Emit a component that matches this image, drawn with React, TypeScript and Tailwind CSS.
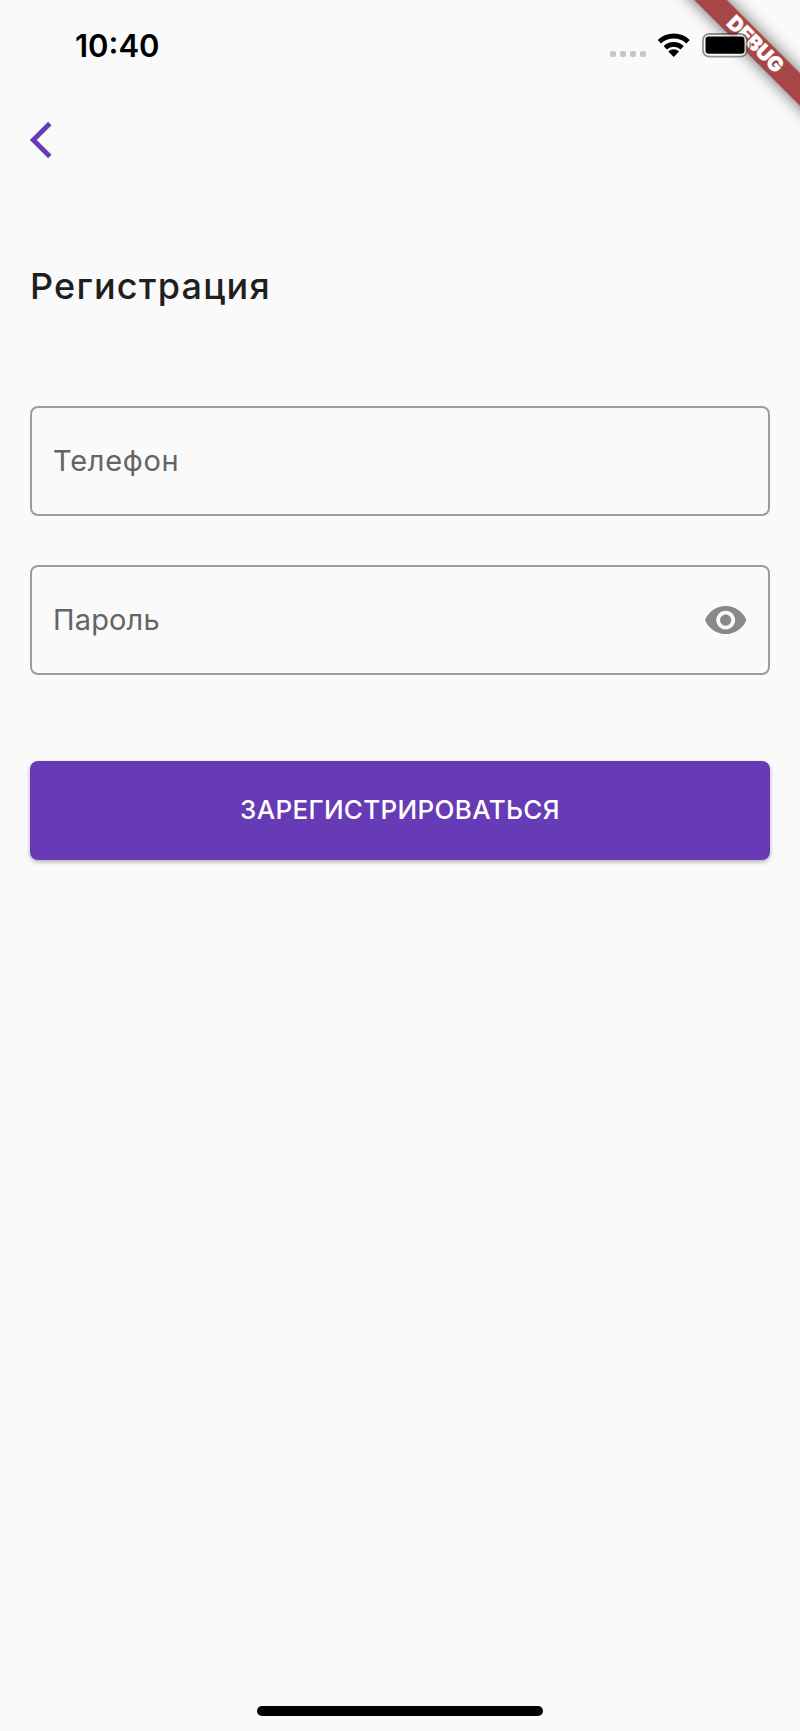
function SignalDots() {
  return (
    <div className="flex gap-1">
      <span className="size-1.5 rounded-[2px] bg-[#c6c6c6]" />
      <span className="size-1.5 rounded-[2px] bg-[#c6c6c6]" />
      <span className="size-1.5 rounded-[2px] bg-[#c6c6c6]" />
      <span className="size-1.5 rounded-[2px] bg-[#c6c6c6]" />
    </div>
  );
}

function WifiIcon() {
  return (
    <svg width="32" height="24" viewBox="0 0 32 24" fill="none" stroke="#000" strokeWidth="4.8">
      <path d="M1.3 8.7A21.1 21.1 0 0 1 30.1 8.7" />
      <path d="M7.2 14.8A12.5 12.5 0 0 1 24.2 14.8" strokeWidth="4.7" />
      <path d="M15.7 23.9 10.3 18.5A7.6 7.6 0 0 1 21.1 18.5Z" fill="#000" stroke="none" />
    </svg>
  );
}

function BatteryIcon() {
  return (
    <svg width="51" height="25" viewBox="0 0 51 25">
      <rect x="1" y="1" width="43.8" height="22.6" rx="6" fill="#fafafa" fillOpacity="0.7" stroke="#000" strokeOpacity="0.42" strokeWidth="1.8" />
      <rect x="3.5" y="3.6" width="39" height="17.2" rx="3.2" fill="#000" />
      <path d="M47.2 8.6c3 1.2 3 6.4 0 7.6Z" fill="#000" fillOpacity="0.42" />
    </svg>
  );
}

function StatusBar() {
  return (
    <header className="relative z-10 flex h-[90px] items-start justify-between pl-[75px] pr-[47px]">
      <time className="pt-[30px] text-[31px] leading-8 font-semibold text-black">10:40</time>
      <div className="flex items-start pt-[33px]">
        <div className="mr-3 pt-[17.5px]">
          <SignalDots />
        </div>
        <WifiIcon />
        <div className="ml-3">
          <BatteryIcon />
        </div>
      </div>
    </header>
  );
}

function DebugBanner() {
  return (
    <div className="pointer-events-none absolute top-0 right-0 size-[180px] overflow-hidden">
      <div className="absolute top-[32.7px] left-[-14.8px] h-[23px] w-[300px] rotate-45 bg-black/60 blur-[8px]" />
      <div className="absolute top-[32.7px] left-[-14.8px] flex h-[23px] w-[300px] rotate-45 items-center justify-center bg-[#a74646] text-[20.2px] leading-none font-black text-white [-webkit-text-stroke:0.4px_white]">
        DEBUG
      </div>
    </div>
  );
}

function EyeIcon() {
  return (
    <svg className="mt-px" width="41.4" height="28.2" viewBox="1 4.5 22 15" fill="#898989">
      <path d="M12 4.5C7 4.5 2.73 7.61 1 12c1.73 4.39 6 7.5 11 7.5s9.27-3.11 11-7.5c-1.73-4.39-6-7.5-11-7.5zM12 17c-2.76 0-5-2.24-5-5s2.24-5 5-5 5 2.24 5 5-2.24 5-5 5zm0-8c-1.66 0-3 1.34-3 3s1.34 3 3 3 3-1.34 3-3-1.34-3-3-3z" />
    </svg>
  );
}

export default function App() {
  return (
    <div className="relative flex h-[1731px] w-[800px] flex-col overflow-hidden bg-[#fafafa] font-['Inter',sans-serif]">
      <DebugBanner />
      <StatusBar />
      <main className="flex flex-1 flex-col px-[30px] pt-8">
        <button type="button" aria-label="Назад" className="flex h-9 w-[22px] items-center">
          <svg className="overflow-visible" width="21.4" height="36" viewBox="0 2.1 11.67 19.8" fill="#673ab6" stroke="#673ab6" strokeWidth="0.25">
            <path d="M11.67 3.87 9.9 2.1 0 12l9.9 9.9 1.77-1.77L3.54 12z" />
          </svg>
        </button>
        <h1 className="mt-[108px] text-[36px] leading-10 font-[460] tracking-[1.2px] text-[#1f1f1f]">
          Регистрация
        </h1>
        <form className="mt-[99.5px] flex flex-col">
          <label className="flex h-[110px] items-center rounded-lg border-2 border-[#9c9c9c] pl-[21px] text-[29px] font-[370] tracking-[0.7px] text-[#646464]">
            Телефон
          </label>
          <label className="mt-[49px] flex h-[110px] items-center justify-between rounded-lg border-2 border-[#9c9c9c] pr-[21.5px] pl-[21px] text-[29px] font-[370] tracking-[0.15px] text-[#646464]">
            Пароль
            <EyeIcon />
          </label>
          <button
            type="button"
            className="mt-[86.5px] flex h-[98.5px] items-center justify-center rounded-lg bg-[#673ab6] pb-[2px] text-[26px] font-medium tracking-[0.32px] text-white shadow-[0_2px_4px_rgba(0,0,0,0.3)]"
          >
            ЗАРЕГИСТРИРОВАТЬСЯ
          </button>
        </form>
      </main>
      <div className="mb-[15px] h-[10px] w-[286px] self-center rounded-full bg-black" />
    </div>
  );
}
